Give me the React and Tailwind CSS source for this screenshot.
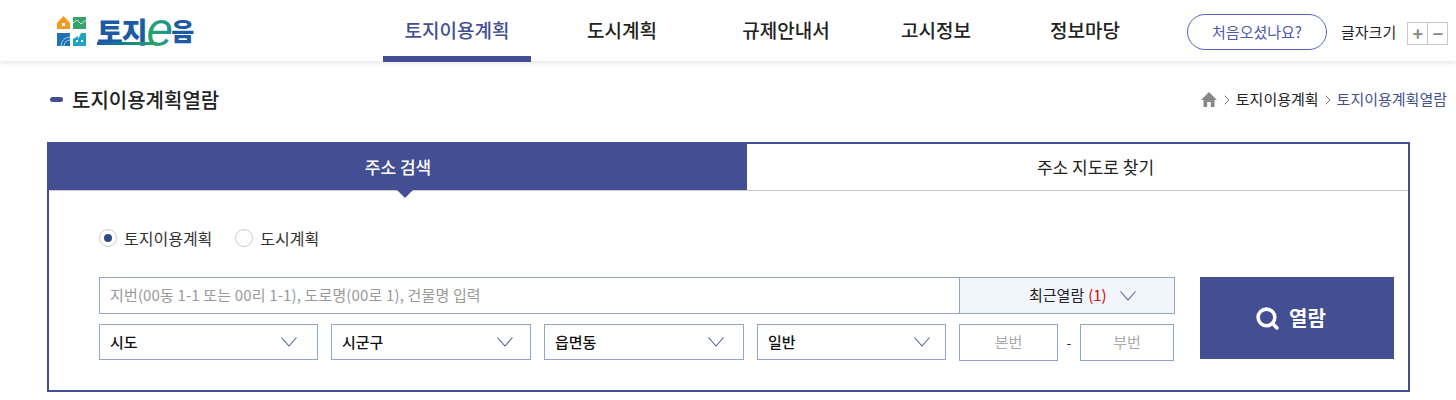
import { ChevronRight, Search } from 'lucide-react';

const NAV = [
  { label: '토지이용계획', width: 'w-[148px]', active: true },
  { label: '도시계획', width: 'w-[182px]' },
  { label: '규제안내서', width: 'w-[146px]' },
  { label: '고시정보', width: 'w-[154px]' },
  { label: '정보마당', width: 'w-[144px]' },
];

function Chevron({ className }) {
  return (
    <svg width="16" height="10" viewBox="0 0 16 10" fill="none" stroke="#4a5f8f" strokeWidth="1.1" className={className}>
      <path d="M0.5 0.5 L8 9 L15.5 0.5" />
    </svg>
  );
}

function LogoMark() {
  return (
    <svg width="29" height="30" viewBox="0 0 29 30" className="shrink-0">
      <path d="M0 7 L6.5 0 L13 7 V13 H0 Z" fill="#f39a1f" />
      <rect x="5" y="7" width="3" height="3" fill="#fff" />
      <rect x="16" y="1" width="13" height="12" fill="#37a36b" />
      <path d="M16 7 L20 4 L24 8 L29 4" fill="none" stroke="#c9ecd6" strokeWidth="1" />
      <rect x="0" y="17" width="13" height="13" fill="#1f6fb5" />
      <path d="M13 21 A9 9 0 0 0 4 30 M13 24 A6 6 0 0 0 7 30" fill="none" stroke="#a8d3ee" strokeWidth="1" />
      <path d="M16 23 L21 20 V23 L24 17 L29 17 V30 H16 Z" fill="#21a3c4" />
      <rect x="19" y="24" width="2" height="2" fill="#fff" />
      <rect x="24" y="24" width="2" height="2" fill="#fff" />
    </svg>
  );
}

function Logo() {
  return (
    <div className="flex h-[61px] w-[383px] shrink-0 items-center gap-[11px] pl-[57px]">
      <LogoMark />
      <div className="relative flex h-[30px] items-center text-[28px] font-black tracking-[-1px] text-[#1c5aa6]">
        <span>토지</span>
        <span className="-mt-[2px] -mr-[1px] bg-gradient-to-r from-[#2ba55f] to-[#1b8f9c] bg-clip-text pr-[3px] font-['Liberation_Sans',sans-serif] text-[48px] leading-[48px] font-normal text-transparent italic">e</span>
        <span className="-ml-[3px] text-[25px]">음</span>
        <span className="absolute top-[26px] left-0 h-[3px] w-[60px] bg-gradient-to-r from-[#1c5aa6] to-[#2ba55f]" />
      </div>
    </div>
  );
}

function Header() {
  return (
    <header className="flex h-[61px] items-start bg-white shadow-[0_2px_5px_rgba(0,0,0,0.1)]">
      <Logo />
      <nav className="flex">
        {NAV.map((item) => (
          <div
            key={item.label}
            className={`${item.width} h-[62px] pt-[16px] text-center text-[19px] leading-[28px] font-medium ${item.active ? 'border-b-[6px] border-[#444f93] text-[#444f93]' : 'text-[#222]'}`}
          >
            {item.label}
          </div>
        ))}
      </nav>
      <div className="ml-[30px] flex items-start pt-[14px]">
        <div className="flex h-[36px] w-[140px] items-center justify-center rounded-full border border-[#5562c0] text-[15px] text-[#4d5ab0]">
          처음오셨나요?
        </div>
        <span className="ml-[14px] text-[15px] leading-[36px] text-[#222]">글자크기</span>
        <div className="mt-[8px] ml-[11px] flex h-[23px] w-[41px] border border-[#c8c8c8] text-[#888]">
          <span className="flex w-[20px] items-center justify-center border-r border-[#c8c8c8] text-[18px] font-bold">+</span>
          <span className="flex flex-1 items-center justify-center text-[18px] font-bold">−</span>
        </div>
      </div>
    </header>
  );
}

function TitleBar() {
  return (
    <div className="flex h-[81px] items-center justify-between pr-[9px] pb-[4px] pl-[50px]">
      <div className="flex items-center gap-[9px]">
        <span className="h-[5px] w-[13px] rounded-full bg-[#444f93]" />
        <h1 className="text-[20px] font-medium text-[#222]">토지이용계획열람</h1>
      </div>
      <div className="flex items-center text-[15px] text-[#222]">
        <svg width="16" height="15" viewBox="0 0 16 15" fill="#888">
          <path d="M8 0 L16 8 H13.5 V15 H9.8 V10 H6.2 V15 H2.5 V8 H0 Z" />
        </svg>
        <ChevronRight size={16} strokeWidth={1.3} className="mr-[1px] ml-[2px] text-[#666]" />
        <span>토지이용계획</span>
        <ChevronRight size={16} strokeWidth={1.3} className="mx-[1px] text-[#666]" />
        <span className="text-[#444f93]">토지이용계획열람</span>
      </div>
    </div>
  );
}

function Tabs() {
  return (
    <div className="flex h-[47px] border-b border-[#ccc] text-[17px]">
      <div className="relative flex w-[698px] items-center justify-center bg-[#444f93] font-medium text-white">
        주소 검색
        <span className="absolute top-full left-1/2 ml-[-1px] h-0 w-0 border-x-[8px] border-t-[8px] border-x-transparent border-t-[#444f93]" />
      </div>
      <div className="flex flex-1 items-center justify-center pl-[36px] text-[#222]">주소 지도로 찾기</div>
    </div>
  );
}

function Radio({ label, checked }) {
  return (
    <label className="flex items-center gap-[7px] text-[16px] text-[#333]">
      <span className="flex h-[18px] w-[18px] items-center justify-center rounded-full border border-[#ccc] bg-white">
        {checked && <span className="h-[8px] w-[8px] rounded-full bg-[#2f4b8c]" />}
      </span>
      {label}
    </label>
  );
}

function SelectBox({ label, width, padding }) {
  return (
    <div className={`${width} ${padding} flex h-[36px] shrink-0 items-center justify-between border border-[#8fa5d2] pl-[10px] text-[15px] font-medium text-[#111]`}>
      {label}
      <Chevron />
    </div>
  );
}

function NumberBox({ label, width }) {
  return (
    <div className={`${width} flex h-[37px] shrink-0 items-center justify-center border border-[#8fa5d2] text-[15px] text-[#aaa]`}>
      {label}
    </div>
  );
}

function SearchForm() {
  return (
    <div className="flex items-start">
      <div className="w-[1076px] shrink-0">
        <div className="flex h-[37px] border border-[#8fa5d2]">
          <div className="flex flex-1 items-center pl-[10px] text-[15px] tracking-[0.15px] text-[#999]">
            지번(00동 1-1 또는 00리 1-1), 도로명(00로 1), 건물명 입력
          </div>
          <div className="flex w-[215px] items-center border-l border-[#8fa5d2] bg-[#f1f6fd] pl-[69px] text-[15px] text-[#222]">
            최근열람
            <span className="ml-[4px] text-[#e00000]">(1)</span>
            <Chevron className="ml-[13px]" />
          </div>
        </div>
        <div className="mt-[10px] flex items-start">
          <SelectBox label="시도" width="w-[219px]" padding="pr-[20px]" />
          <div className="w-[13px]" />
          <SelectBox label="시군구" width="w-[200px]" padding="pr-[17px]" />
          <div className="w-[13px]" />
          <SelectBox label="읍면동" width="w-[200px]" padding="pr-[19px]" />
          <div className="w-[13px]" />
          <SelectBox label="일반" width="w-[189px]" padding="pr-[15px]" />
          <div className="w-[13px]" />
          <NumberBox label="본번" width="w-[99px]" />
          <span className="w-[22px] text-center text-[14px] leading-[37px] text-[#333]">-</span>
          <NumberBox label="부번" width="w-[94px]" />
        </div>
      </div>
      <button className="ml-[25px] flex h-[82px] w-[194px] shrink-0 items-center justify-center gap-[9px] bg-[#444f93] pr-[13px] text-[20px] font-bold text-white">
        <Search size={25} strokeWidth={3.4} />
        열람
      </button>
    </div>
  );
}

export default function App() {
  return (
    <div className="h-[400px] w-[1456px] overflow-hidden bg-white font-['Noto_Sans_CJK_KR',sans-serif]">
      <Header />
      <TitleBar />
      <div className="mr-[46px] ml-[47px] h-[250px] border-2 border-[#444f93]">
        <Tabs />
        <div className="pt-[37px] pr-[14px] pl-[50px]">
          <div className="flex h-[20px] items-center gap-[23px]">
            <Radio label="토지이용계획" checked />
            <Radio label="도시계획" />
          </div>
          <div className="mt-[29px]">
            <SearchForm />
          </div>
        </div>
      </div>
    </div>
  );
}
